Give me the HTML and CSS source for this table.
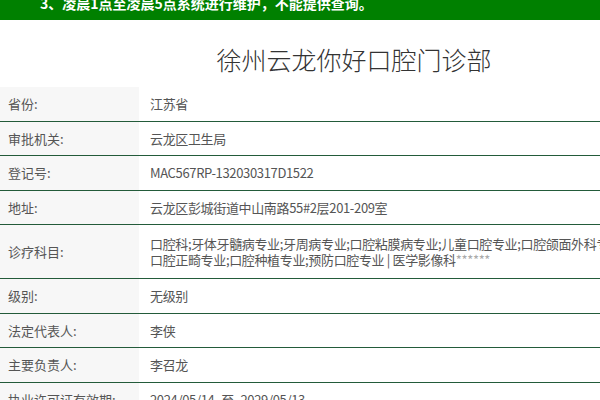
FILE: index.html
```html
<!DOCTYPE html>
<html lang="zh-CN">
<head>
<meta charset="utf-8">
<title>徐州云龙你好口腔门诊部</title>
<link rel="stylesheet" href="styles.css">
</head>
<body>
<div class="notice">
  <div class="notice-text">3、凌晨1点至凌晨5点系统进行维护，不能提供查询。</div>
</div>
<div class="page">
  <h1 class="title">徐州云龙你好口腔门诊部</h1>
  <div class="info">
    <div class="row"><div class="label">省份:</div><div class="value">江苏省</div></div>
    <div class="row"><div class="label">审批机关:</div><div class="value">云龙区卫生局</div></div>
    <div class="row"><div class="label">登记号:</div><div class="value">MAC567RP-132030317D1522</div></div>
    <div class="row"><div class="label">地址:</div><div class="value">云龙区彭城街道中山南路55#2层201-209室</div></div>
    <div class="row tall"><div class="label">诊疗科目:</div><div class="value">口腔科;牙体牙髓病专业;牙周病专业;口腔粘膜病专业;儿童口腔专业;口腔颌面外科专业;<br>口腔正畸专业;口腔种植专业;预防口腔专业 | 医学影像科<span class="mask">******</span></div></div>
    <div class="row"><div class="label">级别:</div><div class="value">无级别</div></div>
    <div class="row"><div class="label">法定代表人:</div><div class="value">李侠</div></div>
    <div class="row"><div class="label">主要负责人:</div><div class="value">李召龙</div></div>
    <div class="row"><div class="label">执业许可证有效期:</div><div class="value">2024/05/14 -至- 2029/05/13</div></div>
  </div>
</div>
</body>
</html>
```
FILE: styles.css
```css
html {
  overflow: hidden;
}
body {
  margin: 0;
  font-family: "Noto Sans CJK SC", sans-serif;
  color: #555;
  background: #fff;
}
.notice {
  height: 20px;
  background: #008000;
  display: flex;
  align-items: flex-end;
  overflow: hidden;
  width: 708px;
}
.notice-text {
  padding: 0 0 10px 40px;
  color: #fff;
  font-weight: bold;
  font-size: 14px;
  line-height: 14px;
  white-space: nowrap;
}
.page {
  width: 708px;
}
.title {
  margin: 21px 0 9px;
  text-align: center;
  font-size: 25px;
  line-height: 37px;
  font-weight: 300;
  color: #333;
}
.info {
  display: flex;
  flex-direction: column;
  width: 760px;
}
.row {
  display: grid;
  grid-template-columns: 139px 1fr;
  border-bottom: 1px solid #235b3a;
  font-size: 13px;
  line-height: 15.5px;
}
.label {
  background: #f7f7f7;
  padding: 9px 8px;
  white-space: nowrap;
  display: flex;
  align-items: center;
}
.value {
  padding: 9px 10px 9px 11px;
  display: flex;
  align-items: center;
  white-space: nowrap;
  letter-spacing: -0.35px;
}
.tall .value {
  display: block;
  padding-top: 11px;
  padding-bottom: 11px;
}
.mask {
  color: #aaa;
}
```
